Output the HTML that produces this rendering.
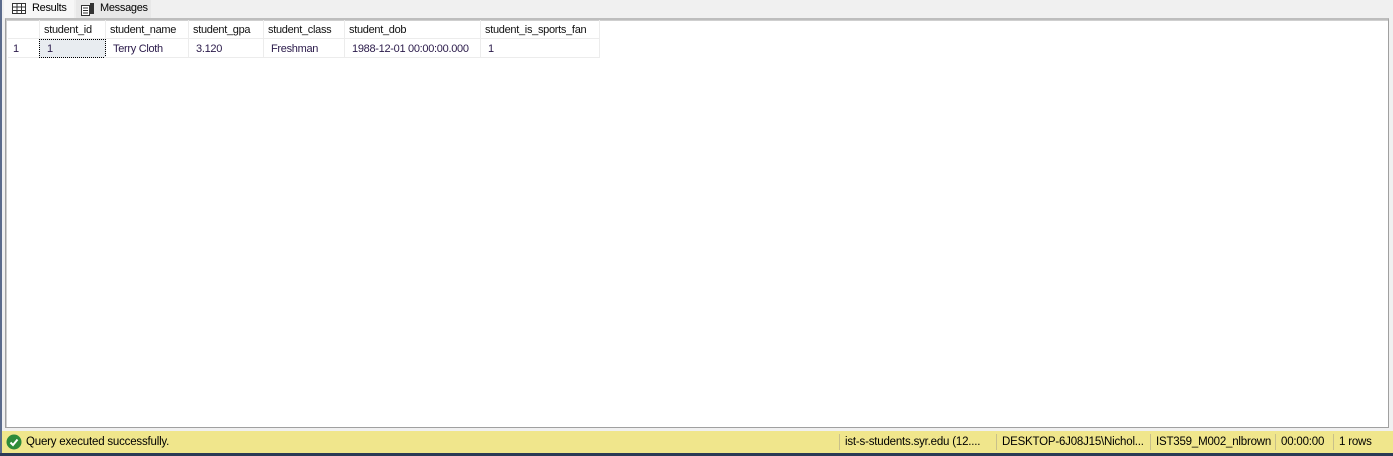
<!DOCTYPE html>
<html><head><style>
body{margin:0;width:1393px;height:456px;background:#f0f0f0;position:relative;overflow:hidden;font-family:"Liberation Sans",sans-serif;font-size:11px;letter-spacing:-0.3px;color:#000}
.lb{position:absolute;left:0;top:0;width:2px;height:456px;background:#5b6b8c}
.tab{position:absolute;top:0;height:18px;line-height:17px}
.grid{position:absolute;left:5px;top:18px;width:1382px;height:407px;border:1px solid #a0a0a0;border-top:2px solid #bdbdbd;background:#fff;box-shadow:inset 1px 1px 0 #cfcfcf}
.c{position:absolute;height:19px;line-height:20px;border-right:1px solid #ececec;border-bottom:1px solid #ececec;box-sizing:border-box;white-space:nowrap;overflow:hidden}
.h{color:#111}
.d{color:#2a1a4a}
.status{position:absolute;left:2px;top:431px;width:1391px;height:22px;background:#f0e68c;line-height:22px;font-size:11.5px;letter-spacing:-0.2px}
.status span{white-space:nowrap}
.bot{position:absolute;left:0;top:453px;width:1393px;height:3px;background:#2b3a55}
.sep{position:absolute;top:3px;width:1px;height:16px;background:#c8c08a}
</style></head><body>
<div class="lb"></div>
<div class="tab" style="left:4px;width:70px;background:#f7f7f7">
<svg width="14" height="12" style="position:absolute;left:8px;top:3px"><rect x="0.5" y="0.5" width="13" height="10" fill="#fff" stroke="#333"/><path d="M0 4h14M0 7.5h14M5 0v11M9.5 0v11" stroke="#333"/></svg>
<span style="position:absolute;left:28px">Results</span></div>
<div class="tab" style="left:76px;width:75px;background:#e8e8e8">
<svg width="14" height="13" style="position:absolute;left:5px;top:3px"><rect x="0.5" y="2.5" width="8" height="10" fill="#fff" stroke="#333"/><path d="M2 5h5M2 7.5h5M2 10h5" stroke="#333"/><rect x="9" y="0" width="4" height="11" fill="#333"/></svg>
<span style="position:absolute;left:24px">Messages</span></div>
<div class="grid">
<div class="c" style="left:2px;top:0;width:32px"></div>
<div class="c h" style="left:33px;top:0;width:67px;padding-left:5px">student_id</div>
<div class="c h" style="left:99px;top:0;width:84px;padding-left:5px">student_name</div>
<div class="c h" style="left:182px;top:0;width:76px;padding-left:5px">student_gpa</div>
<div class="c h" style="left:257px;top:0;width:82px;padding-left:5px">student_class</div>
<div class="c h" style="left:338px;top:0;width:137px;padding-left:5px">student_dob</div>
<div class="c h" style="left:474px;top:0;width:120px;padding-left:5px">student_is_sports_fan</div>
<div class="c d" style="left:2px;top:19px;width:32px;padding-left:5px">1</div>
<div class="c d" style="left:33px;top:19px;width:67px;padding-left:7px;background:#e8ecf0;border:1px dotted #000;line-height:18px">1</div>
<div class="c d" style="left:99px;top:19px;width:84px;padding-left:8px">Terry Cloth</div>
<div class="c d" style="left:182px;top:19px;width:76px;padding-left:8px">3.120</div>
<div class="c d" style="left:257px;top:19px;width:82px;padding-left:8px">Freshman</div>
<div class="c d" style="left:338px;top:19px;width:137px;padding-left:8px">1988-12-01 00:00:00.000</div>
<div class="c d" style="left:474px;top:19px;width:120px;padding-left:8px">1</div>
</div>
<div class="status">
<svg width="16" height="16" style="position:absolute;left:4px;top:3px"><circle cx="8" cy="8" r="7.5" fill="#2e8b3a"/><path d="M4.5 8.5l2.5 2.5 4.5-5.5" stroke="#fff" stroke-width="2" fill="none"/></svg>
<span style="position:absolute;left:24px">Query executed successfully.</span>
<div class="sep" style="left:837px"></div><span style="position:absolute;left:843px">ist-s-students.syr.edu (12....</span>
<div class="sep" style="left:994px"></div><span style="position:absolute;left:1000px">DESKTOP-6J08J15\Nichol...</span>
<div class="sep" style="left:1148px"></div><span style="position:absolute;left:1154px">IST359_M002_nlbrown</span>
<div class="sep" style="left:1273px"></div><span style="position:absolute;left:1279px">00:00:00</span>
<div class="sep" style="left:1331px"></div><span style="position:absolute;left:1337px">1 rows</span>
</div>
<div class="bot"></div>
</body></html>
